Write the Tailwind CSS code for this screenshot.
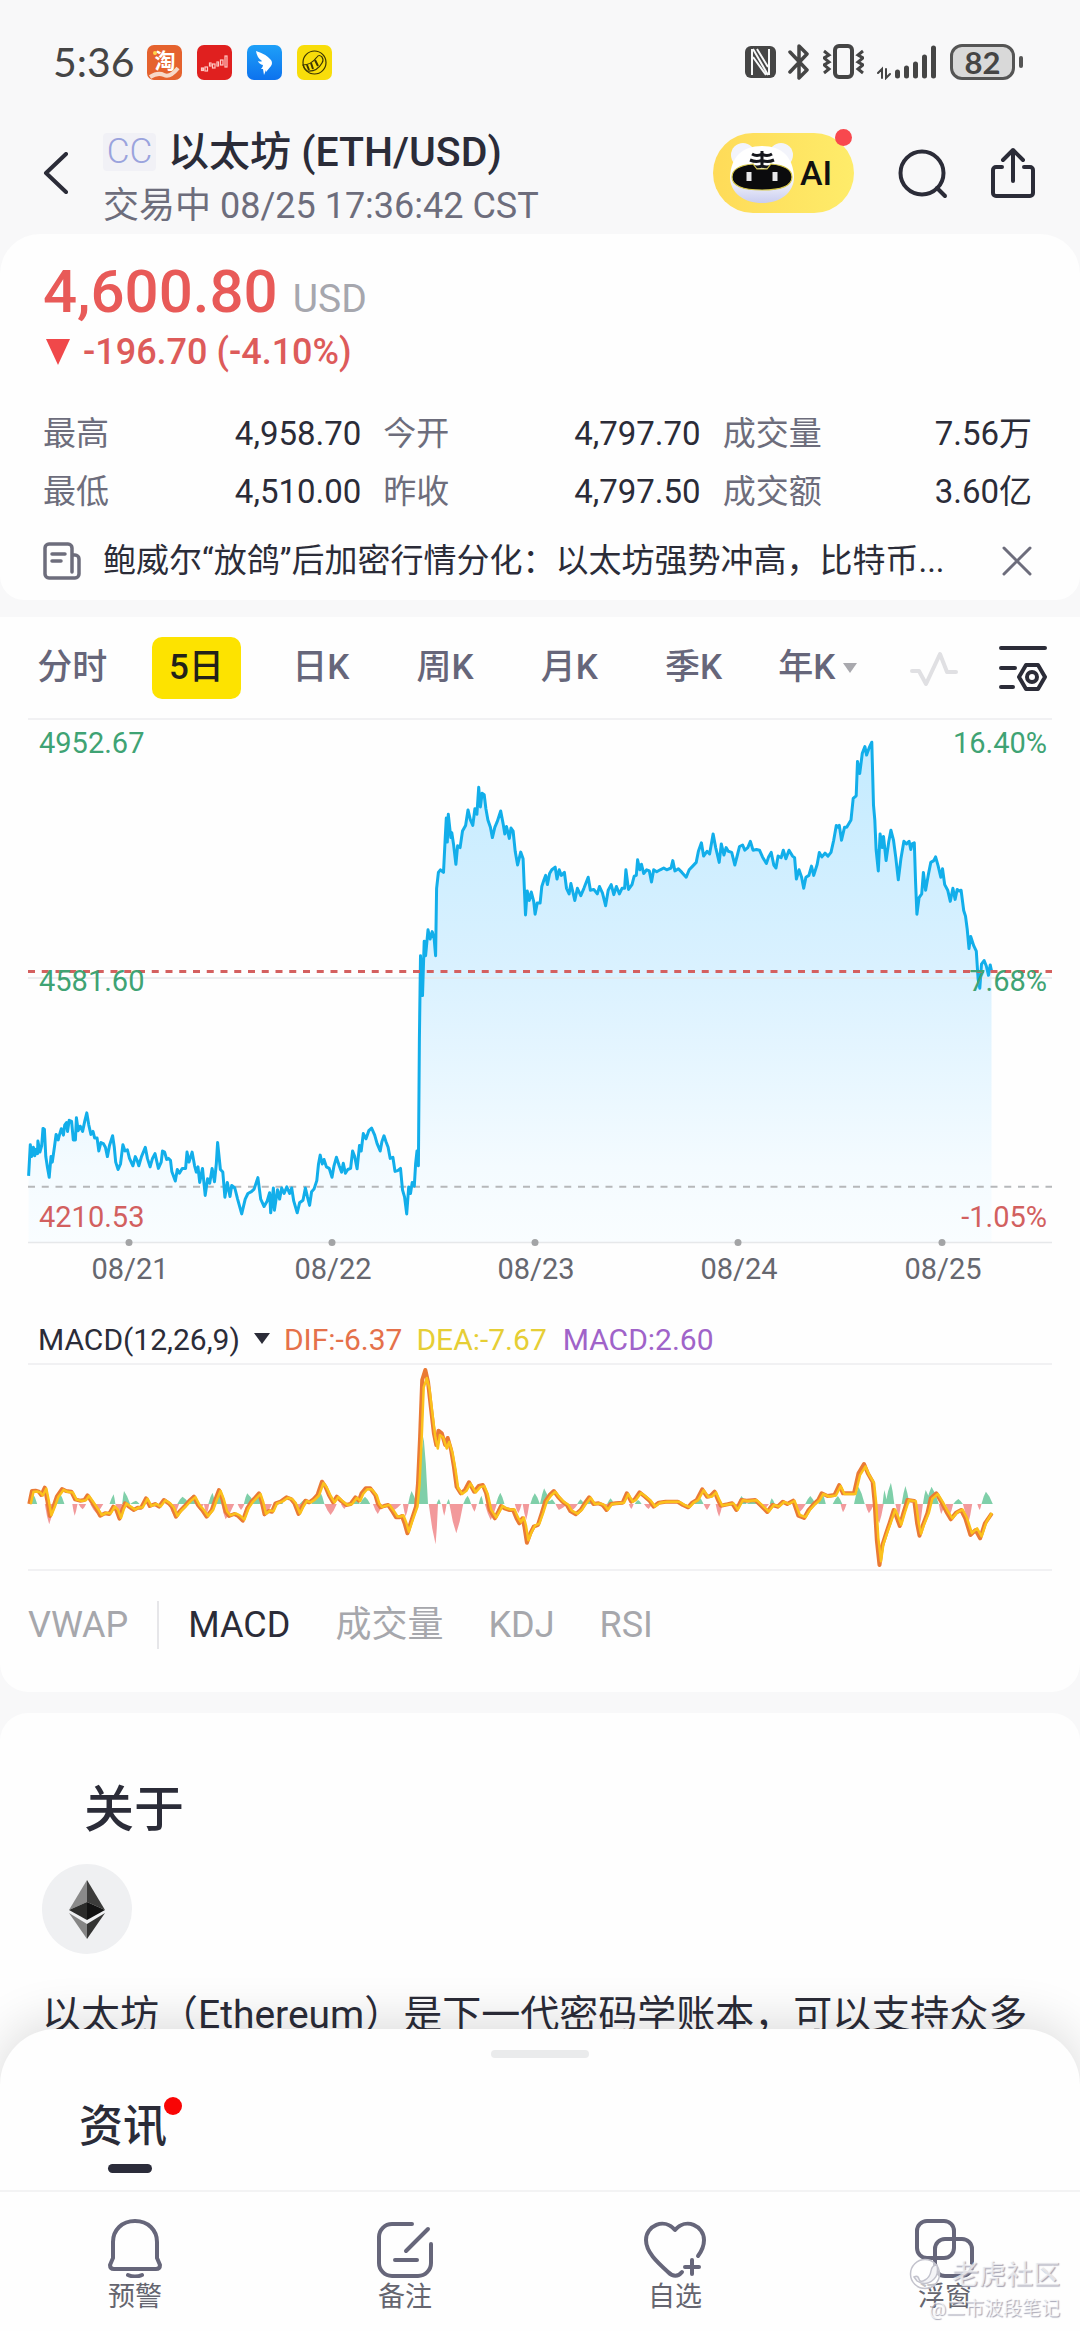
<!DOCTYPE html>
<html lang="zh-CN">
<head>
<meta charset="utf-8">
<meta name="viewport" content="width=device-width, initial-scale=1">
<title>以太坊 (ETH/USD)</title>
<script src="https://cdn.jsdelivr.net/npm/@tailwindcss/browser@4"></script>
</head>
<body class="bg-[#f8f8f9] text-[#2b2c38] font-['Roboto','Noto_Sans_CJK_SC',sans-serif]">
<div class="flex min-h-screen flex-col overflow-hidden">

  <!-- Status bar -->
  <div class="flex items-center justify-between pt-10 pl-[53px] pr-[57px] text-[#454545]">
    <div class="flex h-11 items-center">
      <span class="mr-3 w-[82px] font-['Lato',sans-serif] text-[41px] leading-[44px]">5:36</span>
      <div class="flex items-center gap-[15px]">
        <svg class="size-[35px]" viewBox="0 0 35 35"><rect width="35" height="35" rx="7" fill="#e5622e"/><text x="18" y="23" font-size="21" font-weight="700" text-anchor="middle" fill="#fff" font-family="Noto Sans CJK SC">淘</text><path d="M3 32q8-5 14-2t14-7" stroke="#f7d9c8" stroke-width="4" fill="none"/><circle cx="8" cy="8" r="2" fill="#ffd54a"/></svg>
        <svg class="size-[35px]" viewBox="0 0 35 35"><rect width="35" height="35" rx="7" fill="#e0201f"/><g fill="none" stroke="#ffc9c4" stroke-width="1.200"><rect x="4.500" y="23" width="2" height="2.500"/><rect x="8" y="22" width="2.500" height="4"/><rect x="12.500" y="18" width="1.500" height="3"/><rect x="15.500" y="19" width="2.500" height="4"/><rect x="20" y="17" width="1.500" height="4"/><rect x="23.500" y="15" width="2.500" height="5"/><rect x="28" y="11" width="2" height="11"/></g></svg>
        <svg class="size-[35px]" viewBox="0 0 35 35"><defs><linearGradient id="ding" x2="0" y2="1"><stop stop-color="#1ea0f8"/><stop offset="1" stop-color="#0d72ee"/></linearGradient></defs><rect width="35" height="35" rx="7" fill="url(#ding)"/><path d="M9 6q10 3 15 9q2 3 0 6l-5 6 0-2-2 5-1-6-2 0q2-2 2-4-4-1-5-4 3 1 4 0-5-3-6-10z" fill="#fff"/></svg>
        <svg class="size-[35px]" viewBox="0 0 35 35"><rect width="35" height="35" rx="7" fill="#f8dd0a"/><g fill="none" stroke="#3b3505" stroke-width="1.200"><circle cx="17.500" cy="17.500" r="11.500"/><path d="M6 20q8 0 14-8q2-3 5 0 2 3 0 6-5 9-15 8-3-2-4-6z"/><path d="M10 20l2 5M14 18l2 6M18 15l3 6" stroke-width="2"/></g></svg>
      </div>
    </div>
    <div class="flex items-center">
      <svg class="h-8 w-[31px]" viewBox="0 0 31 32"><rect width="31" height="32" rx="6" fill="#454545"/><path d="M7 3v26M24 3v26M8 3l15 26M8 11l13 18M12 3l11 18" stroke="#f7f8f8" stroke-width="2"/></svg>
      <svg class="ml-3 h-9 w-[22px]" viewBox="0 0 22 36" fill="none" stroke="#454545" stroke-width="3.500" stroke-linejoin="round" stroke-linecap="round"><path d="M2 8l17 18-8 8V2l8 8L2 28"/></svg>
      <svg class="ml-[13px] h-9 w-[41px]" viewBox="0 0 41 36" fill="none" stroke="#454545"><rect x="12" y="2" width="17" height="31" rx="4" stroke-width="4"/><path d="M1 7l5 4-5 3 5 4-5 3 5 4-5 4M40 7l-5 4 5 3-5 4 5 3-5 4 5 4" stroke-width="3"/></svg>
      <svg class="ml-[13px] h-9 w-[61px]" viewBox="0 0 61 36" stroke="#454545" fill="none" stroke-linecap="round"><path d="M1 29l4-4v9M9 25v9l4-4" stroke-width="2" /><path d="M20.500 28v4M29.500 24v8M38.500 20v12M47.500 13v19M56.500 4v28" stroke-width="5"/></svg>
      <div class="ml-3 flex h-9 w-[65px] items-center justify-center rounded-xl border-3 border-[#555] bg-[#d9d9d9] font-['Lato',sans-serif] text-[31px] leading-8 font-bold">82</div>
      <span class="ml-1 h-3 w-1 rounded-full bg-[#555]"></span>
    </div>
  </div>

  <!-- Title bar -->
  <header class="mt-11 flex items-start pr-[45px] pb-1 pl-10">
    <button class="mt-6 w-[63px] text-left" aria-label="返回"><svg class="h-[42px] w-8" viewBox="0 0 32 42" fill="none" stroke="#2b2c38" stroke-width="4" stroke-linecap="round" stroke-linejoin="round"><path d="M26 2L6 21l20 19"/></svg></button>
    <div class="flex flex-1 flex-col gap-1.5">
      <div class="flex items-center">
        <span class="mr-3 w-[53px] rounded bg-[#f1f1f6] text-center text-[35px] leading-[38px] font-light text-[#9aa3dd]">CC</span>
        <h1 class="text-[41px] leading-[48px] font-medium">以太坊 (ETH/USD)</h1>
      </div>
      <p class="text-[36px] leading-[48px] text-[#6d6d7c]">交易中 08/25 17:36:42 CST</p>
    </div>
    <div class="mt-[5px] flex h-20 items-center">
      <button class="relative flex h-20 w-[141px] items-center rounded-full bg-linear-to-r from-[#fedb58] to-[#feec6a] pl-[15px]">
        <svg class="h-[64px] w-[68px]" viewBox="0 0 68 64">
          <defs><linearGradient id="tg" x2="0" y2="1"><stop offset=".5" stop-color="#fff"/><stop offset="1" stop-color="#c9cdf0"/></linearGradient></defs>
          <circle cx="15" cy="14" r="12" fill="#f3f4fb"/><circle cx="53" cy="14" r="12" fill="#f3f4fb"/>
          <path d="M34 5C14 5 3 16 2 36c0 16 14 26 32 26s32-10 32-26C65 16 54 5 34 5z" fill="url(#tg)"/>
          <path d="M24 13q5 3 10 0 5 3 10 0M22 19q7 3 12 0 5 3 12 0M24 25q5 2 10 0 5 2 10 0M34 10v15" stroke="#15161c" stroke-width="3" fill="none"/>
          <path d="M4 36q0-11 21-13l4 5h10l4-5q21 2 21 13 0 13-30 13T4 36z" fill="#0b0b0d" stroke="#d8c94a" stroke-width="1.200"/>
          <path d="M21 31v9M47 31v9" stroke="#e8e8ea" stroke-width="5"/>
        </svg>
        <span class="ml-1 text-[34px] leading-10 font-medium text-[#111]">AI</span>
        <span class="absolute -top-1 right-0.5 size-[17px] rounded-full bg-[#f8484e]"></span>
      </button>
      <button class="ml-[43px]" aria-label="搜索"><svg class="size-[52px]" viewBox="0 0 52 52" fill="none" stroke="#2b2c38" stroke-width="4" stroke-linecap="round"><circle cx="25" cy="26" r="21.500"/><path d="M40 41l8 8"/></svg></button>
      <button class="ml-[42px]" aria-label="分享"><svg class="h-[52px] w-11" viewBox="0 0 44 52" fill="none" stroke="#2b2c38" stroke-width="4" stroke-linecap="round" stroke-linejoin="round"><path d="M11 20H5a3 3 0 0 0-3 3v23a3 3 0 0 0 3 3h34a3 3 0 0 0 3-3V23a3 3 0 0 0-3-3h-6M22 34V3M12 13L22 3l10 10"/></svg></button>
    </div>
  </header>

  <!-- Quote -->
  <section class="rounded-t-[40px] rounded-b-[24px] bg-[#fefefe] pt-[22px] pr-[48px] pb-[19px] pl-[43px]">
    <div class="flex items-baseline text-[60px] leading-[72px] font-medium text-[#e85a58]">4,600.80<span class="ml-[15px] text-[39px] leading-10 font-normal text-[#a6a7ae]">USD</span></div>
    <div class="mt-1 flex items-center text-[36px] leading-10 font-medium text-[#dd5b5a]">
      <svg class="ml-[3px] mr-[13px] h-[26px] w-[24px]" viewBox="0 0 24 26"><path d="M0 0h24L12 26z" fill="#f0484a"/></svg>-196.70 (-4.10%)
    </div>
    <dl class="mt-[42px] grid grid-cols-[318fr_317fr_309fr] gap-x-[22px] gap-y-[18px] text-[33px] leading-10">
      <div class="flex justify-between"><dt class="text-[#6d6d7c]">最高</dt><dd>4,958.70</dd></div>
      <div class="flex justify-between"><dt class="text-[#6d6d7c]">今开</dt><dd>4,797.70</dd></div>
      <div class="flex justify-between"><dt class="text-[#6d6d7c]">成交量</dt><dd>7.56万</dd></div>
      <div class="flex justify-between"><dt class="text-[#6d6d7c]">最低</dt><dd>4,510.00</dd></div>
      <div class="flex justify-between"><dt class="text-[#6d6d7c]">昨收</dt><dd>4,797.50</dd></div>
      <div class="flex justify-between"><dt class="text-[#6d6d7c]">成交额</dt><dd>3.60亿</dd></div>
    </dl>
    <div class="mt-[29px] flex h-10 items-center">
      <svg class="mr-[22px] size-[38px] shrink-0" viewBox="0 0 38 38" fill="none" stroke="#6d6d7c" stroke-width="3.500" stroke-linecap="round" stroke-linejoin="round"><path d="M29 36H6a4 4 0 0 1-4-4V6a4 4 0 0 1 4-4h19a4 4 0 0 1 4 4v24M29 13h3a4 4 0 0 1 4 4v15a4 4 0 0 1-4 4h-3M9 12h13M9 19h9"/></svg>
      <a href="#" class="min-w-0 flex-1 whitespace-nowrap text-[33px] leading-10">鲍威尔“放鸽”后加密行情分化：以太坊强势冲高，比特币...</a>
      <button aria-label="关闭"><svg class="size-[30px]" viewBox="0 0 30 30" stroke="#6d6d7c" stroke-width="3" stroke-linecap="round"><path d="M2 2l26 26M28 2L2 28"/></svg></button>
    </div>
  </section>

  <!-- Charts -->
  <section class="mt-[17px] rounded-b-[28px] bg-[#fefefe] pb-[13px]">
    <div class="mx-7 flex h-[103px] items-center border-b-2 border-[#f1f1f3]">
      <div class="-ml-[18px] grid flex-1 grid-cols-7 text-[35px] leading-[62px] font-medium text-[#66667a]">
        <button>分时</button>
        <button class="mx-auto w-[89px] rounded-[10px] bg-[#fde300] text-[#22221a]">5日</button>
        <button>日K</button>
        <button>周K</button>
        <button>月K</button>
        <button>季K</button>
        <button class="flex items-center justify-center">年K<svg class="ml-2 h-[10px] w-[14px]" viewBox="0 0 14 10"><path d="M0 0h14L7 10z" fill="#a9a9ae"/></svg></button>
      </div>
      <div class="flex items-center gap-[41px] pr-[5px] pl-[30px]">
        <button aria-label="走势"><svg class="size-12" viewBox="0 0 48 48" fill="none" stroke="#e0e0e3" stroke-width="4" stroke-linecap="round" stroke-linejoin="round"><path d="M2 27h7l7 13L30 10l7 18h9"/></svg></button>
        <button aria-label="设置"><svg class="size-12" viewBox="0 0 48 48" fill="none" stroke="#2b2c38" stroke-width="4" stroke-linecap="round" stroke-linejoin="round"><path d="M2 4h44M2 24h14M2 43h12M27 21h12l7 12-7 12H27l-7-12z"/><circle cx="33" cy="33" r="5"/></svg></button>
      </div>
    </div>

    <svg class="block w-full" viewBox="0 0 1080 571" font-size="29" role="img" aria-label="5日走势图">
      <defs><linearGradient id="area" gradientUnits="userSpaceOnUse" x1="0" y1="20" x2="0" y2="522"><stop stop-color="#c4ebff"/><stop offset=".45" stop-color="#d9f1ff"/><stop offset=".85" stop-color="#f4fbff"/><stop offset="1" stop-color="#f9fdff"/></linearGradient></defs>
      <path id="price-area" fill="url(#area)"/>
      <path d="M28 258H1052M28 522.500H1052" stroke="#e6e8ea" stroke-width="1.500"/>
      <path d="M28 466.700H1052" stroke="#b6b8ba" stroke-width="2" stroke-dasharray="7 6.750"/>
      <path id="price-line" fill="none" stroke="#12aeea" stroke-width="3" stroke-linejoin="round"/>
      <path d="M28 251.600H1052" stroke="#d4605f" stroke-width="3" stroke-dasharray="7 6.750"/>
      <g fill="#a3a4a6"><circle cx="129" cy="522.500" r="3.500"/><circle cx="332" cy="522.500" r="3.500"/><circle cx="535" cy="522.500" r="3.500"/><circle cx="738" cy="522.500" r="3.500"/><circle cx="942" cy="522.500" r="3.500"/></g>
      <g fill="#3fa374"><text x="39" y="33">4952.67</text><text x="39" y="271">4581.60</text><text x="1047" y="33" text-anchor="end">16.40%</text><text x="1047" y="271" text-anchor="end">7.68%</text></g>
      <g fill="#d2605f"><text x="39" y="507">4210.53</text><text x="1047" y="507" text-anchor="end">-1.05%</text></g>
      <g fill="#66676f" text-anchor="middle"><text x="130" y="559">08/21</text><text x="333" y="559">08/22</text><text x="536" y="559">08/23</text><text x="739" y="559">08/24</text><text x="943" y="559">08/25</text></g>
    </svg>

    <div class="flex items-center pt-[29px] pb-[3px] pl-[38px] text-[30px] leading-10">
      <button class="flex items-center">MACD(12,26,9)<svg class="mx-[14px] mb-1 h-[11px] w-4" viewBox="0 0 16 11"><path d="M0 0h16L8 11z" fill="#2b2c38"/></svg></button>
      <span class="text-[#e5714a]">DIF:-6.37</span>
      <span class="ml-[14px] text-[#e6ce35]">DEA:-7.67</span>
      <span class="ml-4 text-[#a063c9]">MACD:2.60</span>
    </div>
    <svg class="block w-full" viewBox="0 0 1080 208" role="img" aria-label="MACD">
      <path d="M28 1H1052M28 207H1052" stroke="#f1f1f3" stroke-width="2"/>
      <path id="hist-up" fill="#7fcfa9"/>
      <path id="hist-down" fill="#f2999b"/>
      <path id="dif" fill="none" stroke="#ea7a35" stroke-width="4" stroke-linejoin="round"/>
      <path id="dea" fill="none" stroke="#fbc11c" stroke-width="2.500" stroke-linejoin="round"/>
    </svg>

    <div class="flex h-[108px] items-center pl-7 text-[36px] leading-[48px] text-[#a6a7ac]">
      <button>VWAP</button>
      <span class="mx-[29px] h-12 w-[2px] bg-[#e6e6e9]"></span>
      <div class="flex gap-[45px]"><button class="text-[#2b2c38]">MACD</button><button>成交量</button><button>KDJ</button><button>RSI</button></div>
    </div>
  </section>

  <!-- About -->
  <section class="mt-[21px] rounded-t-[28px] bg-[#fefefe] px-[42px] pt-[67px] pb-10">
    <h2 class="pl-[42px] text-[50px] leading-[60px] font-medium">关于</h2>
    <svg class="mt-[24px] size-[90px]" viewBox="0 0 90 90"><circle cx="45" cy="45" r="45" fill="#eff0f2"/><path d="M45 16L27 46l18-8z" fill="#8a8a8a"/><path d="M45 16l18 30-18-8z" fill="#3c3c3b"/><path d="M27 46l18-8v18z" fill="#2c2c2b"/><path d="M63 46l-18-8v18z" fill="#121212"/><path d="M27 49l18 11v15z" fill="#858585"/><path d="M63 49L45 60v15z" fill="#343433"/></svg>
    <p class="mt-9 h-[50px] whitespace-nowrap text-[39px] leading-[50px]">以太坊（Ethereum）是下一代密码学账本，可以支持众多</p>
  </section>

  <!-- News sheet and bottom bar -->
  <div class="relative z-10 -mt-[51px] flex-1 rounded-t-[56px] bg-[#fefefe] pt-[21px] shadow-[0_-6px_50px_rgba(0,0,0,0.14)]">
    <div class="mx-auto h-2 w-[98px] rounded-full bg-[#eaebec]"></div>
    <div class="mt-[43px] flex pb-[17px] pl-[79px]">
      <button class="relative text-left text-[44px] leading-[52px] font-medium">资讯
        <span class="mt-[11px] ml-[29px] block h-[9px] w-11 rounded-full bg-[#2b2c3a]"></span>
        <span class="absolute -top-1 -right-[15px] size-[18px] rounded-full bg-[#f90505]"></span>
      </button>
    </div>
    <nav class="grid grid-cols-4 border-t-2 border-[#f3f3f4] pt-6 pb-[15px] text-[27px] leading-[34px] text-[#65656f]">
      <a href="#" class="flex flex-col items-center gap-0.5"><svg class="size-[62px]" viewBox="0 0 62 62" fill="none" stroke="#66667a" stroke-width="4" stroke-linecap="round" stroke-linejoin="round"><path d="M31 5C18 5 9 14 9 26v16l-3 7q0 4 4 4h42q4 0 4-4l-3-7V26C53 14 44 5 31 5zM24 59q7 3 14 0"/></svg>预警</a>
      <a href="#" class="flex flex-col items-center gap-0.5"><svg class="size-[62px]" viewBox="0 0 62 62" fill="none" stroke="#66667a" stroke-width="4" stroke-linecap="round"><path d="M38 8H18A13 13 0 0 0 5 21v26a13 13 0 0 0 13 13h26a13 13 0 0 0 13-13V28M54 13L32 35M21 44h22"/></svg>备注</a>
      <a href="#" class="flex flex-col items-center gap-0.5"><svg class="size-[62px]" viewBox="0 0 62 62" fill="none" stroke="#66667a" stroke-width="4" stroke-linecap="round" stroke-linejoin="round"><path d="M38 56c-4 5-9 5-14 0C13 46 2 36 2 24 2 10 20 1 31 14 42 1 60 10 60 24q0 8-6 16M48 44v14M41 51h14"/></svg>自选</a>
      <a href="#" class="flex flex-col items-center gap-0.5"><svg class="size-[62px]" viewBox="0 0 62 62" fill="none" stroke="#66667a" stroke-width="4"><rect x="3" y="5" width="37" height="37" rx="10"/><rect x="21" y="23" width="37" height="37" rx="10"/></svg>浮窗</a>
    </nav>
    <div class="pointer-events-none absolute right-5 bottom-2 flex flex-col items-end text-white/70 [text-shadow:1px_1px_1px_#a4a4b4]">
      <div class="flex items-center gap-[10px] text-[27px] leading-7 font-medium"><svg class="size-[33px]" viewBox="0 0 33 33"><circle cx="16" cy="16" r="14.500" fill="#fff" fill-opacity=".6" stroke="#c3c3cd" stroke-width="1.500"/><path d="M5 19q4-2 5 2t6 1 6-9 6-6q2 9-3 14-8 8-17 2z" fill="#f4f4f7" stroke="#c3c3cd" stroke-width="1.500"/></svg>老虎社区</div>
      <div class="mt-1 text-[19px] leading-7">@二市波段笔记</div>
    </div>
  </div>
</div>

<script>
// Each series is a flat list of x,y samples; the scale pair turns samples into chart units.
const pairs = (text, ox, sx, oy, sy) => {
  const n = text.trim().split(/[\s,]+/).map(Number), out = [];
  for (let i = 0; i < n.length; i += 2) out.push([ox + n[i] / sx, oy + n[i + 1] / sy]);
  return out;
};
const line = p => 'M' + p.map(q => q[0].toFixed(1) + ' ' + q[1].toFixed(1)).join('L');
const set = (id, d) => document.getElementById(id).setAttribute('d', d);

const early = `83,1232 88,1148 92,1180 97,1155 101,1178 105,1160 109,1172 110,1138 116,1168 121,1150 125,1104 129,1106 133,1180 138,1210 143,1236 148,1180 152,1195 158,1155 163,1120 169,1135 173,1120 178,1105 184,1122 188,1095 193,1088 196,1112 201,1082 208,1085 213,1135 219,1135 222,1075 227,1110 233,1098 240,1112 246,1085 252,1062 258,1095 264,1120 270,1112 275,1130 282,1130 287,1165 293,1142 300,1145 306,1155 312,1180 318,1150 327,1124 332,1155 336,1195 343,1215 350,1200 357,1148 363,1165 370,1162 376,1185 386,1205 393,1180 398,1190 403,1205 411,1180 422,1155 428,1185 436,1208 443,1185 450,1172 460,1212 468,1195 472,1165 478,1168 484,1188 489,1185 495,1190 499,1220 509,1246 515,1215 521,1225 529,1212 539,1212 543,1168 549,1195 558,1168 565,1205 570,1222 575,1208 580,1250 588,1212 596,1285 603,1240 609,1252 616,1212 623,1248 628,1200 632,1142 640,1215 647,1222 653,1290 660,1250 668,1288 673,1258 682,1265 690,1295 702,1335 712,1295 720,1280 730,1275 738,1268 749,1237 757,1295 767,1315 776,1300 783,1278 786,1332 794,1265 797,1325 806,1270 812,1295 818,1265 825,1280 833,1262 841,1280 847,1265 853,1300 863,1332 870,1305 880,1298 887,1265 893,1290 899,1312 905,1275 912,1268 920,1245 925,1200 930,1176 936,1200 941,1188 948,1208 956,1212 964,1236 970,1205 977,1182 985,1205 992,1222 997,1198 1003,1225 1010,1215 1018,1212 1024,1165 1030,1180 1037,1213 1044,1150 1049,1165 1055,1118 1063,1132 1071,1110 1079,1103 1088,1122 1095,1145 1104,1165 1109,1140 1115,1124 1121,1140 1127,1155 1133,1185 1141,1182 1147,1220 1155,1218 1163,1212 1169,1270 1175,1290 1181,1335 1187,1262 1192,1280 1197,1250 1203,1260 1207,1200 1211,1165 1215,1205 1218,860 1221,637 1227,745 1232,598 1236,637 1243,567 1249,592 1255,572 1261,592 1265,637 1268,455 1273,412 1279,405 1288,412 1293,320 1296,265 1299,330 1302,255 1309,318 1312,305 1317,335 1324,390 1329,340 1336,345 1343,300 1352,285 1359,243 1366,270 1373,285 1379,240 1385,255 1390,182 1395,235 1400,198 1406,202 1411,240 1417,270 1424,290 1430,318 1437,290 1444,275 1454,246 1461,280 1466,308 1471,288 1479,320 1484,292 1490,300 1496,355 1503,392 1512,357 1519,375 1522,440 1526,527 1531,462 1537,488 1543,465 1550,490 1554,525 1560,495`;
const late = `323,495 327,450 332,432 336,420 340,445 345,415 350,405 358,398 362,430 367,405 372,420 379,412 384,455 390,470 394,442 403,488 409,455 417,475 424,455 434,425 439,460 447,458 455,470 460,450 467,468 474,502 480,460 487,445 493,472 499,450 506,470 512,455 518,455 521,405 527,458 535,445 540,422 545,420 548,378 553,405 557,390 562,415 569,405 575,408 580,438 585,405 592,410 600,405 608,400 615,405 625,400 629,380 634,408 642,402 650,412 660,425 667,405 675,395 683,385 688,355 695,332 700,368 708,355 714,362 722,308 728,345 736,385 741,335 747,365 752,345 757,355 765,358 772,392 778,365 783,342 790,338 795,352 802,345 808,328 814,352 822,350 829,352 836,370 845,388 850,370 856,358 862,392 867,400 872,368 879,372 884,352 890,375 897,352 905,368 910,372 914,430 920,405 926,425 931,455 936,425 943,420 949,395 954,420 962,390 967,358 973,370 980,360 987,368 994,358 1000,325 1006,285 1011,290 1013,285 1018,325 1025,290 1030,290 1040,270 1045,212 1052,205 1055,112 1060,145 1066,90 1072,72 1076,95 1082,75 1088,60 1092,230 1095,270 1098,350 1103,408 1107,308 1112,345 1115,315 1121,380 1127,330 1132,298 1138,325 1143,370 1149,432 1155,375 1162,328 1168,335 1174,328 1178,350 1181,335 1186,332 1189,440 1192,525 1197,480 1203,470 1207,412 1212,460 1218,420 1224,385 1231,380 1235,370 1241,395 1247,425 1251,402 1256,445 1263,460 1269,490 1275,455 1280,485 1285,458 1290,462 1294,460 1300,515 1304,530 1308,565 1312,618 1316,585 1323,610 1329,625 1333,700 1337,725 1341,660 1347,650 1352,665 1357,690 1361,662 1364,678`;
const price = pairs(early, 0, 2.904, 0, 2.703).concat(pairs(late, 400, 2.306, 0, 2.703));
set('price-line', line(price));
set('price-area', line(price) + `L${price[price.length - 1][0]} 522L${price[0][0]} 522Z`);

const difA = `85,582 93,543 103,542 113,545 120,555 130,533 137,570 145,618 155,590 165,560 180,537 192,543 207,545 218,568 232,572 245,570 254,556 266,575 280,597 291,617 305,610 317,612 329,590 338,600 347,626 355,600 363,580 375,590 388,600 400,593 410,593 424,565 435,588 450,582 462,590 476,570 490,580 500,592 511,620 521,605 535,590 550,572 563,560 575,585 587,600 600,620 615,600 625,570 636,540 645,565 655,605 665,618 680,612 692,618 705,632 718,595 730,575 742,562 752,550 760,575 768,613 780,603 790,605 800,580 815,575 832,562 845,567 855,580 867,612 877,590 887,572 898,577 910,568 922,555 935,515 945,530 955,555 967,577 978,560 990,572 1005,585 1018,582 1032,562 1042,572 1050,550 1062,535 1075,535 1090,555 1097,580 1105,592 1115,588 1127,585 1140,605 1150,622 1160,622 1167,618 1175,640 1183,670 1192,640 1200,615 1208,590 1214,520 1220,380 1226,210 1235,180 1243,215 1251,290 1260,370 1267,405 1273,362 1283,370 1293,405 1300,384 1310,420 1318,470 1326,530 1338,550 1350,540 1362,517 1377,545 1390,528 1402,525 1412,550 1422,600 1437,625 1447,605 1455,588 1465,595 1480,600 1490,600 1500,625 1508,640 1517,625 1523,650 1530,698 1540,670 1550,650 1562,645`;
const difB = `5,610 15,575 28,555 40,543 52,560 65,575 78,585 88,603 104,613 118,600 130,580 143,562 155,582 170,580 182,585 193,600 205,582 220,580 240,578 252,550 265,575 275,568 289,547 305,560 318,572 330,590 345,578 365,575 385,575 400,575 415,585 430,592 442,578 455,570 471,538 485,560 495,558 507,545 517,570 525,587 545,583 558,580 570,600 585,570 600,572 625,570 640,585 660,606 675,585 690,590 705,575 718,582 735,572 750,617 767,624 780,600 795,582 808,570 818,550 835,558 855,555 869,525 880,550 895,550 912,550 925,490 941,462 952,490 966,515 972,580 978,690 986,765 993,710 1005,670 1015,640 1027,600 1035,620 1045,648 1055,610 1067,570 1087,573 1095,640 1102,677 1112,645 1125,610 1135,565 1151,550 1165,575 1180,605 1193,628 1208,608 1223,600 1235,625 1250,675 1265,660 1278,685 1292,640 1312,610`;
const dif = pairs(difA, 0, 2.904, -53, 3).concat(pairs(difB, 540, 2.904, -53, 3));
const dea = dif.map(([x, y], i) => [Math.min(x + 1.5, 992), 141 + (y - 141) * 0.94]);
set('dif', line(dif));
set('dea', line(dea));

// Histogram lobes: start, peak position, end, peak value
const lobes = (text, ox) => text.trim().split(/\s+/).map(s => {
  const [a, p, b, v] = s.split(',').map(Number), X = t => (ox + t / 2.904).toFixed(1), Y = t => (-53 + t / 3).toFixed(1);
  const m = 582 + (v - 582) * 0.6;
  return `M${X(a)} 141L${X((a + p) / 2)} ${Y(m)}L${X(p)} ${Y(v)}L${X((b + p) / 2)} ${Y(m)}L${X(b)} 141Z`;
}).join('');
set('hist-up', lobes(`85,95,108,550 163,175,187,552 318,330,335,553 355,360,378,543 378,395,405,572 418,425,432,568 515,530,550,560 545,560,570,555 605,617,625,548 628,640,648,550 708,718,740,550 735,752,762,552 800,812,822,570 870,885,900,568 905,930,942,545 1025,1035,1045,565 1045,1060,1075,560 1185,1195,1210,543 1210,1230,1243,380 1268,1275,1280,567 1297,1303,1307,567 1345,1358,1368,557 1390,1398,1404,557 1440,1453,1465,548 1540,1553,1568,550`, 0)
  + lobes(`0,12,30,535 20,35,45,568 108,118,128,568 128,145,155,562 195,205,215,565 275,285,295,570 448,462,475,560 575,585,600,558 600,620,632,572 667,673,682,565 770,785,800,558 808,820,830,550 850,865,878,558 912,925,943,530 995,1000,1008,540 1003,1019,1029,518 1050,1061,1073,528 1112,1120,1135,540 1122,1137,1158,530 1200,1215,1228,567 1282,1295,1315,545`, 540));
set('hist-down', lobes(`130,143,157,643 210,217,225,617 228,240,250,598 262,280,300,610 335,347,355,620 440,450,458,590 490,505,520,617 568,580,592,600 592,600,608,612 643,655,680,628 690,700,710,600 757,768,790,620 857,867,880,600 942,960,978,615 990,1000,1008,597 1083,1097,1110,612 1120,1145,1165,600 1170,1178,1187,620 1245,1265,1272,703 1283,1290,1297,617 1305,1325,1345,670 1368,1378,1385,605 1408,1425,1443,630 1495,1505,1515,610 1518,1528,1537,630`, 0)
  + lobes(`45,55,80,600 75,95,110,600 170,190,200,598 258,265,272,597 302,315,325,597 475,485,495,600 510,520,530,620 555,570,578,600 630,650,665,598 742,755,772,605 873,880,890,607 945,955,970,610 965,985,998,640 1032,1042,1048,620 1087,1100,1112,660 1158,1165,1175,612 1178,1190,1200,615 1228,1245,1255,635 1270,1277,1282,600`, 540));
</script>
</body>
</html>
